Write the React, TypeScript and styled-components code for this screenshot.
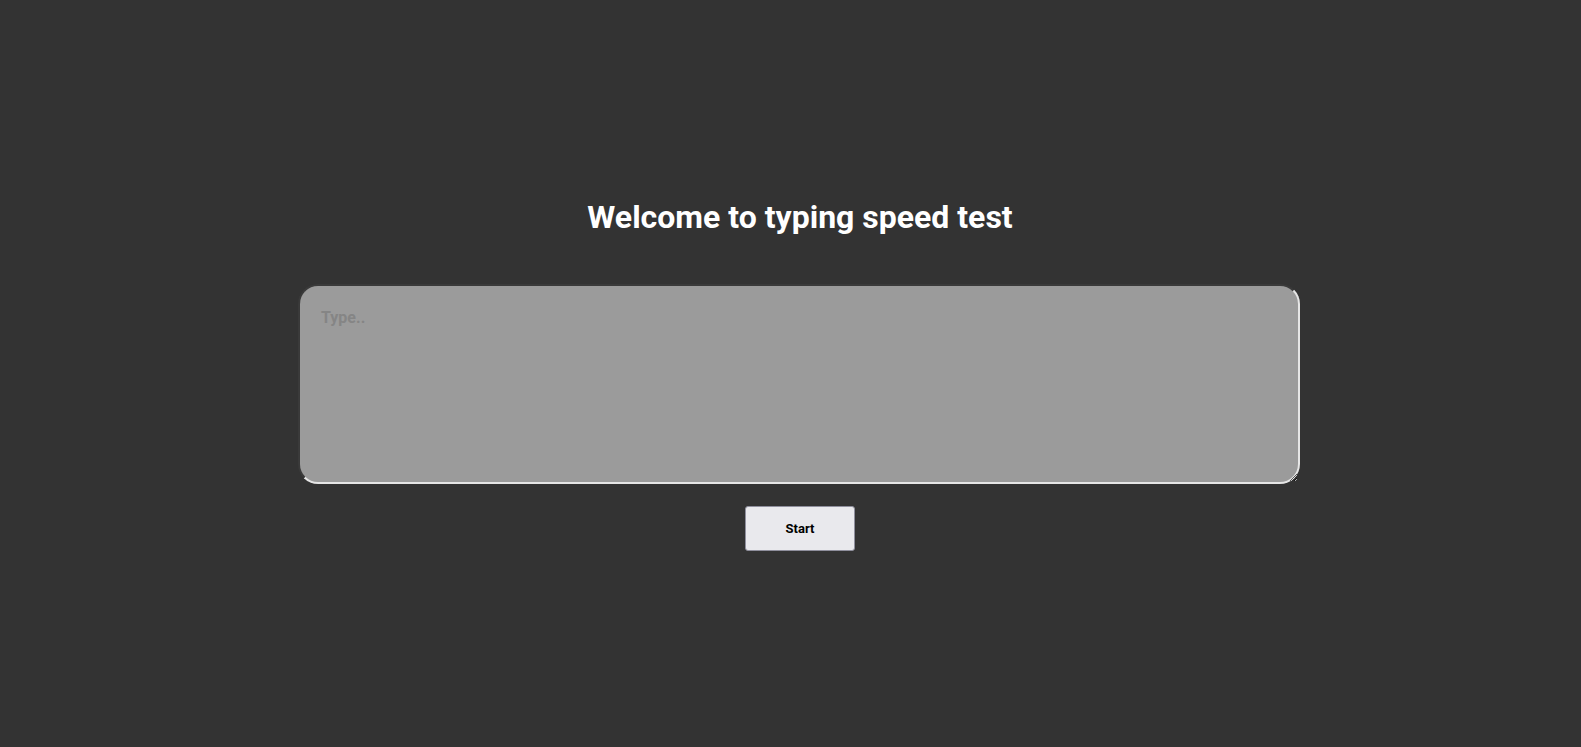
import React from "react";
import styled, { createGlobalStyle } from "styled-components";

const GlobalStyle = createGlobalStyle`
  html, body {
    margin: 0;
    padding: 0;
    background: #333333;
    font-family: Roboto, "Liberation Sans", sans-serif;
  }
`;

const Page = styled.main`
  min-height: 100vh;
  box-sizing: border-box;
  display: flex;
  flex-direction: column;
  align-items: center;
  justify-content: center;
  padding-left: 19px;
  padding-top: 1px;
`;

const Title = styled.h1`
  margin: 0 0 48px;
  color: #ffffff;
  font-family: Roboto, "Liberation Sans", sans-serif;
  font-weight: 700;
  font-size: 32px;
  line-height: 38px;
`;

const TypeArea = styled.textarea`
  box-sizing: border-box;
  width: 1002px;
  height: 200px;
  margin-right: 2px;
  padding: 22px 21px 20px;
  background: #9b9b9b;
  border-radius: 20px;
  border-width: 2px;
  border-style: solid;
  border-color: #3a3a3a #e6e6e6 #e6e6e6 #3a3a3a;
  font-family: Roboto, "Liberation Sans", sans-serif;
  font-weight: 700;
  font-size: 16px;
  color: #222;
  outline: none;
  resize: both;
  &::placeholder {
    color: #858585;
    font-weight: 700;
  }
`;

const StartButton = styled.button`
  margin-top: 22px;
  width: 110px;
  height: 45px;
  background: #e9e9ed;
  border: 1px solid #8f8f9d;
  border-radius: 3px;
  color: #000;
  font-family: Roboto, "Liberation Sans", sans-serif;
  font-weight: 700;
  font-size: 13px;
  cursor: pointer;
`;

export default function App() {
  return (
    <>
      <GlobalStyle />
      <Page>
        <Title>Welcome to typing speed test</Title>
        <TypeArea placeholder="Type.." />
        <StartButton>Start</StartButton>
      </Page>
    </>
  );
}
